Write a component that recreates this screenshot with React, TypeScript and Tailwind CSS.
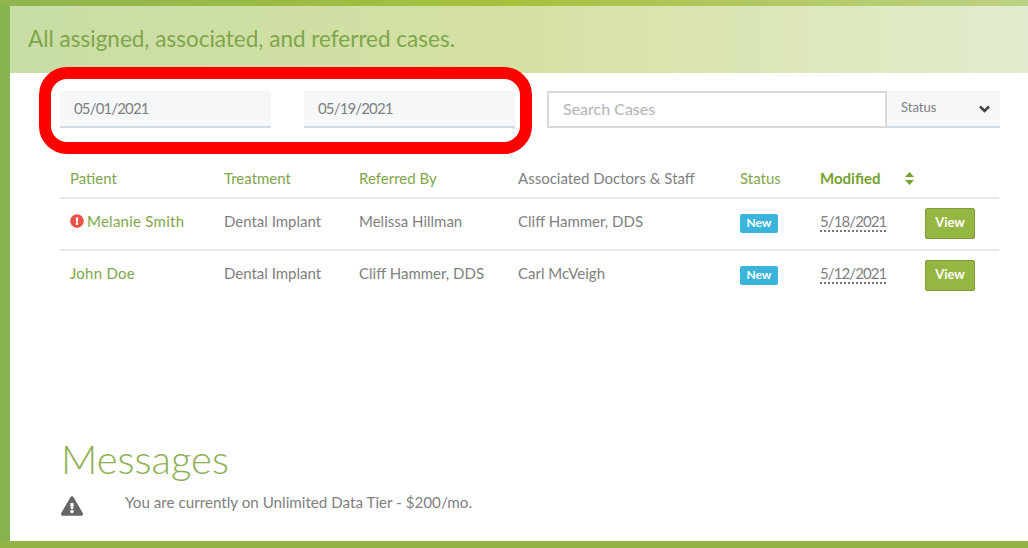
import { FaExclamationCircle, FaExclamationTriangle } from "react-icons/fa";

const font = "font-['Lato','Liberation_Sans',sans-serif]";

const rows = [
  { patient: "Melanie Smith", alert: true, referredBy: "Melissa Hillman", staff: "Cliff Hammer, DDS", modified: "5/18/2021" },
  { patient: "John Doe", alert: false, referredBy: "Cliff Hammer, DDS", staff: "Carl McVeigh", modified: "5/12/2021" },
];

const cols = "grid grid-cols-[154px_135px_159px_222px_80px_85px_20px_1fr] items-center pl-[10px]";

function DateField({ value }: { value: string }) {
  return (
    <div className="flex h-[37px] w-[211px] items-center border-b-2 border-[#d5dbe6] bg-[#f6f7f9] pl-[14px] text-[15px] tracking-[-0.85px] text-[#7f7f7f]">
      {value}
    </div>
  );
}

export default function App() {
  return (
    <div className={`relative flex h-[548px] w-[1028px] flex-col overflow-hidden bg-white ${font}`}>
      {/* Top strip */}
      <div className="h-[6px] shrink-0 bg-gradient-to-r from-[#8fb54e] via-[#a6c13c] to-[#bdd184]" />

      <div className="flex min-h-0 flex-1">
        {/* Left strip */}
        <div className="w-[10px] shrink-0 bg-[#87b44f]" />

        <div className="flex min-w-0 flex-1 flex-col">
          {/* Banner */}
          <div className="flex h-[67px] shrink-0 items-center bg-gradient-to-r from-[#c8dda6] via-[#d5e1a2] to-[#e3ecce] pb-[2px] pl-[18px] text-[22.5px] text-[#7fa64a]">
            All assigned, associated, and referred cases.
          </div>

          {/* Filters */}
          <div className="ml-[50px] mt-[18px] flex">
            <DateField value="05/01/2021" />
            <div className="ml-[33px]">
              <DateField value="05/19/2021" />
            </div>
            <div className="ml-[32px] flex h-[37px] w-[340px] items-center border-2 border-[#d9d9d9] pb-[1px] pl-[14px] text-[16px] text-[#b3b3b3]">
              Search Cases
            </div>
            <div className="flex h-[37px] w-[113px] items-start justify-between border-b-2 border-[#d5dbe6] bg-[#f6f7f9] pl-[14px] pr-[9px] pt-[7px] text-[13px] text-[#808080]">
              <span>Status</span>
              <svg width="13" height="9" viewBox="0 0 13 9" className="mt-[7px]">
                <path d="M2 1.5 L6.5 6 L11 1.5" fill="none" stroke="#444" strokeWidth="2.6" />
              </svg>
            </div>
          </div>

          {/* Cases table */}
          <div className="ml-[50px] mt-[33px] w-[939px] text-[15px]">
            <div className={`${cols} h-[38px] border-b-2 border-[#e6e6e6] pb-[2px] text-[#7fa64a]`}>
              <span>Patient</span>
              <span>Treatment</span>
              <span>Referred By</span>
              <span className="text-[#808080]">Associated Doctors &amp; Staff</span>
              <span>Status</span>
              <span className="font-bold text-[#76a02f]">Modified</span>
              <svg width="9" height="13" viewBox="0 0 9 13">
                <path d="M4.5 0 L9 5 H0 Z M4.5 13 L0 8 H9 Z" fill="#76a02f" />
              </svg>
              <span />
            </div>
            {rows.map((row) => (
              <div key={row.patient} className={`${cols} h-[52px] border-b-2 border-[#e6e6e6] pb-[2px] text-[#808080] last:border-transparent`}>
                <span className="flex items-center gap-[3px] pb-[4px] text-[#7fa64a]">
                  {row.alert && <FaExclamationCircle className="size-[14px] text-[#ea5348]" />}
                  <span className="tracking-[0.25px]">{row.patient}</span>
                </span>
                <span className="pb-[4px]">Dental Implant</span>
                <span className="pb-[4px]">{row.referredBy}</span>
                <span className="pb-[4px]">{row.staff}</span>
                <span className="flex">
                  <span className="flex h-[19px] w-[38px] items-center justify-center rounded-[2px] bg-[#3bb4dc] text-[12px] font-bold text-white">
                    New
                  </span>
                </span>
                <span className="col-span-2 pb-[4px]">
                  <span className="border-b-2 border-dotted border-[#777] tracking-[-0.9px]">{row.modified}</span>
                </span>
                <span className="flex h-[31px] w-[50px] items-center justify-center rounded-[2px] border border-[#7d9c37] bg-[#96b644] text-[13px] font-bold text-white">
                  View
                </span>
              </div>
            ))}
          </div>

          {/* Messages */}
          <div className="ml-[51px] mt-[133px] text-[40px] font-light leading-[46px] text-[#8cb054]">Messages</div>
          <div className="ml-[51px] mt-[5px] flex items-start">
            <FaExclamationTriangle className="mt-[8px] size-[22px] text-[#666]" />
            <span className="ml-[42px] mt-[4px] text-[15.2px] text-[#808080]">
              You are currently on Unlimited Data Tier - $200/mo.
            </span>
          </div>
        </div>
      </div>

      {/* Bottom strip */}
      <div className="h-[7px] shrink-0 bg-[#94b545]" />

      {/* Red highlight over the date fields */}
      <div className="absolute left-[39px] top-[67px] h-[87px] w-[493px] rounded-[28px] border-[12px] border-[#ff0000]" />
    </div>
  );
}
